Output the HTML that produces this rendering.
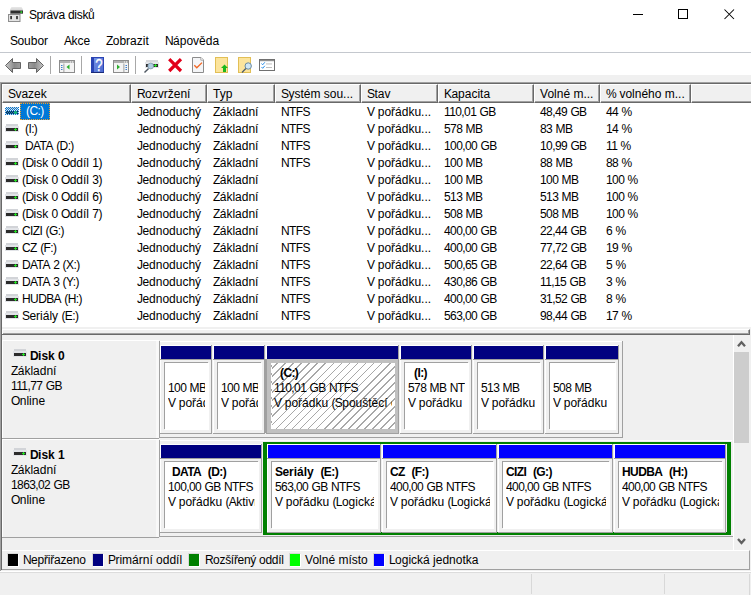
<!DOCTYPE html>
<html><head><meta charset="utf-8">
<style>
*{margin:0;padding:0;box-sizing:border-box}
html,body{width:751px;height:595px;overflow:hidden;background:#f0f0f0;font-family:"Liberation Sans",sans-serif;font-size:12px;color:#000;position:relative}
.a{position:absolute;white-space:nowrap}
.menu{top:34px}
.hd{top:84px;height:19px;background:#f0f0f0;border-left:1px solid #fff;border-top:1px solid #fff;border-right:1px solid #696969;border-bottom:1px solid #696969;box-shadow:inset -1px -1px #a0a0a0}
.ht{position:absolute;top:2px;left:5px;white-space:nowrap}
.c{line-height:14px}
.sel{background:#0078d7;color:#fff;outline:1px dotted #f0a030;outline-offset:-1px;height:17px;width:30px;line-height:17px;padding:0 0 0 6px}
.dico{position:absolute;width:14px;height:8px;background:linear-gradient(#22dd22,#22dd22) 9px 5px/3px 1px no-repeat,linear-gradient(#22dd22,#22dd22) 10px 4px/1px 3px no-repeat,linear-gradient(#2c2c2c,#2c2c2c) 1px 4px/12px 3px no-repeat,linear-gradient(#e2e4e8,#e2e4e8) 0 2px/14px 6px no-repeat,linear-gradient(#d2d4d8,#d2d4d8) 1px 0/12px 2px no-repeat}
.seph{position:absolute;width:1px;height:18px;background:#a0a0a0;top:56px}
.pb{position:absolute;background:#fff}
.ph{position:absolute;background:#000080}
.pl{position:absolute;background:#0000ff}
.pt{position:absolute;white-space:nowrap;overflow:hidden;line-height:16px}
.lg{position:absolute;top:553px;width:12px;height:14px;border:1px solid #fff;border-top-color:#d8d8d8;border-left-color:#d8d8d8}
.lt{position:absolute;top:553px;line-height:14px}
.n{letter-spacing:-0.6px}
</style></head><body>
<!-- title bar -->
<div class="a" style="left:0;top:0;width:751px;height:52px;background:#fff"></div>
<svg class="a" style="left:8px;top:6px" width="17" height="17" viewBox="0 0 17 17">
 <defs><linearGradient id="tg" x1="0" y1="0" x2="0" y2="1"><stop offset="0" stop-color="#e8e8e8"/><stop offset="1" stop-color="#bdbdbd"/></linearGradient></defs>
 <path d="M3.5 1 h10 l1.5 2.5 v4.5 H2 v-4.5 z" fill="url(#tg)"/>
 <rect x="2.5" y="4.5" width="12.5" height="3" fill="#2e2e2e"/>
 <rect x="12.5" y="5.3" width="1.6" height="1.6" fill="#2ee82e"/>
 <rect x="0.5" y="8.5" width="11.5" height="7" fill="#e4e4e4" stroke="#8e8e8e" stroke-width="1"/>
 <rect x="2.3" y="10" width="1.6" height="3.2" fill="#262626"/>
 <rect x="8.2" y="10" width="1.6" height="3.2" fill="#262626"/>
</svg>
<div class="a" style="left:29px;top:8px;letter-spacing:-0.3px"><span class="n">S</span>práva disků</div>
<div class="a" style="left:633px;top:14px;width:10px;height:1px;background:#000"></div>
<div class="a" style="left:678px;top:9px;width:10px;height:10px;border:1px solid #000"></div>
<svg class="a" style="left:724px;top:9px" width="11" height="11" viewBox="0 0 11 11"><path d="M0.5 0.5L10 10M10 0.5L0.5 10" stroke="#000" stroke-width="1.05"/></svg>
<!-- menu -->
<div class="a menu" style="left:10px"><span class="n">S</span>oubor</div>
<div class="a menu" style="left:64px"><span class="n">A</span>kce</div>
<div class="a menu" style="left:106px"><span class="n">Z</span>obrazit</div>
<div class="a menu" style="left:165px"><span class="n">N</span>ápověda</div>
<div class="a" style="left:0;top:52px;width:751px;height:1px;background:#c4c8ce"></div>
<!-- toolbar -->
<div class="a" style="left:0;top:53px;width:751px;height:22px;background:#fff"></div>
<svg class="a" style="left:0;top:53px" width="290" height="22" viewBox="0 53 290 22">
 <defs>
  <linearGradient id="ag" x1="0" y1="0" x2="1" y2="0"><stop offset="0" stop-color="#c8c8c8"/><stop offset="0.6" stop-color="#8a8a8a"/><stop offset="1" stop-color="#a0a0a0"/></linearGradient><linearGradient id="ag2" x1="1" y1="0" x2="0" y2="0"><stop offset="0" stop-color="#c8c8c8"/><stop offset="0.6" stop-color="#8a8a8a"/><stop offset="1" stop-color="#a0a0a0"/></linearGradient>
  <linearGradient id="hg" x1="0" y1="0" x2="1" y2="1"><stop offset="0" stop-color="#7590e4"/><stop offset="1" stop-color="#4a6ad0"/></linearGradient>
 </defs>
 <!-- back -->
 <path d="M5.5 65.5 L12.5 58.5 V62.5 H20.5 V68.5 H12.5 V72.5 Z" fill="url(#ag)" stroke="#646464" stroke-width="1" stroke-linejoin="round"/>
 <!-- forward -->
 <path d="M43.5 65.5 L36.5 58.5 V62.5 H28.5 V68.5 H36.5 V72.5 Z" fill="url(#ag2)" stroke="#646464" stroke-width="1" stroke-linejoin="round"/>
 <rect x="50" y="56" width="1" height="18" fill="#a8a8a8"/>
 <!-- console tree -->
 <rect x="59.5" y="60.5" width="15" height="12" fill="#f4f4f4" stroke="#8c8c8c"/>
 <rect x="60" y="61" width="14" height="2" fill="#b0b0b0"/>
 <rect x="70" y="61.5" width="1" height="1" fill="#fff"/><rect x="72" y="61.5" width="1" height="1" fill="#fff"/>
 <rect x="63.5" y="63.5" width="0.8" height="9" fill="#8c8c8c"/>
 <rect x="61" y="65" width="1.5" height="1" fill="#3a7ed0"/><rect x="61" y="67" width="1.5" height="1" fill="#3a7ed0"/><rect x="61" y="69" width="1.5" height="1" fill="#3a7ed0"/>
 <path d="M66.5 67 L69.5 64.5 V69.5 Z" fill="#2cae2c"/>
 <rect x="81" y="56" width="1" height="18" fill="#a8a8a8"/>
 <!-- help -->
 <rect x="91" y="57" width="13" height="16" fill="#2a44b4"/>
 <rect x="94" y="58" width="9" height="14" fill="url(#hg)"/>
 <rect x="91" y="72" width="13" height="1" fill="#1a2a78"/>
 <text x="98.8" y="70.6" font-family="Liberation Sans" font-size="16" fill="#fff" text-anchor="middle" stroke="#fff" stroke-width="0.3" transform="translate(98.8 0) scale(0.82 1) translate(-98.8 0)">?</text>
 <!-- action pane -->
 <rect x="113.5" y="60.5" width="15" height="12" fill="#f4f4f4" stroke="#8c8c8c"/>
 <rect x="114" y="61" width="14" height="2" fill="#b0b0b0"/>
 <rect x="124" y="61.5" width="1" height="1" fill="#fff"/><rect x="126" y="61.5" width="1" height="1" fill="#fff"/>
 <rect x="123.5" y="63.5" width="0.8" height="9" fill="#8c8c8c"/>
 <rect x="125.5" y="65" width="1.5" height="1" fill="#3a7ed0"/><rect x="125.5" y="67" width="1.5" height="1" fill="#3a7ed0"/><rect x="125.5" y="69" width="1.5" height="1" fill="#3a7ed0"/>
 <path d="M117 64.5 L120 67 L117 69.5 Z" fill="#2cae2c"/>
 <rect x="135" y="56" width="1" height="18" fill="#a8a8a8"/>
 <!-- disk magnifier -->
 <rect x="146" y="60" width="12" height="2" fill="#d6d8dc"/>
 <rect x="145" y="62" width="14" height="6" fill="#e4e6ea"/>
 <rect x="146" y="64" width="12" height="3" fill="#2e2e2e"/>
 <rect x="154" y="65" width="3" height="1" fill="#22e022"/><rect x="155" y="64" width="1" height="3" fill="#22e022"/>
 <path d="M148.6 68.4 L144.5 72.4" stroke="#4e5862" stroke-width="1.4"/>
 <circle cx="150.7" cy="66" r="2.9" fill="#b0cce2" stroke="#7890a4" stroke-width="0.7"/>
 <!-- red X -->
 <path d="M169.2 59.2 L181 71 M181 59.2 L169.2 71" stroke="#e2001a" stroke-width="3.2"/>
 <!-- doc check -->
 <path d="M192.5 57.5 H201 L203.5 60 V72.5 H192.5 Z" fill="#f4f5f7" stroke="#8c8c8c"/>
 <path d="M200.8 57.5 V60.2 H203.5" fill="#fff" stroke="#9a9a9a" stroke-width="0.8"/>
 <path d="M194.3 65.3 L196.8 67.8 L202 62.6" fill="none" stroke="#f26522" stroke-width="1.3"/>
 <!-- folder up -->
 <rect x="215.5" y="57.5" width="12" height="15" fill="#fce49c" stroke="#e2bf56"/>
 <path d="M224.5 64.5 L228 68 H226 V72 H223 V68 H221 Z" fill="#1cb81c"/>
 <!-- folder magnifier -->
 <rect x="238.5" y="57.5" width="12" height="15" fill="#fce49c" stroke="#e2bf56"/>
 <circle cx="248.2" cy="66" r="3.2" fill="#cfe6f4" stroke="#6a8aa0" stroke-width="1"/>
 <path d="M245.8 68.5 L242 72.5" stroke="#4a5a6a" stroke-width="1.2"/>
 <!-- checklist -->
 <rect x="259.5" y="59.5" width="15" height="11" fill="#fff" stroke="#707070"/>
 <rect x="260" y="60" width="14" height="1.2" fill="#909090"/>
 <path d="M261.5 63.5 L262.7 64.8 L264.8 62.3 M261.5 67 L262.7 68.3 L264.8 65.8" fill="none" stroke="#2a8ee8" stroke-width="1"/>
 <rect x="266" y="63.5" width="6" height="0.9" fill="#b8b8b8"/><rect x="266" y="67" width="6" height="0.9" fill="#b8b8b8"/>
</svg>


<!-- list view -->
<div class="a" style="left:0;top:82px;width:751px;height:252px;background:#fff;border-left:1px solid #a0a0a0;border-top:1px solid #a0a0a0"></div><div class="a" style="left:1px;top:83px;width:750px;height:251px;border-left:1px solid #696969;border-top:1px solid #696969"></div>
<div class="a hd" style="left:2px;width:129px"><span class="ht"><span class="n">S</span>vazek</span></div>
<div class="a hd" style="left:131px;width:76px"><span class="ht"><span class="n">R</span>ozvržení</span></div>
<div class="a hd" style="left:207px;width:68px"><span class="ht"><span class="n">T</span>yp</span></div>
<div class="a hd" style="left:275px;width:86px"><span class="ht"><span class="n">S</span>ystém sou...</span></div>
<div class="a hd" style="left:361px;width:77px"><span class="ht"><span class="n">S</span>tav</span></div>
<div class="a hd" style="left:438px;width:96px"><span class="ht"><span class="n">K</span>apacita</span></div>
<div class="a hd" style="left:534px;width:66px"><span class="ht"><span class="n">V</span>olné m...</span></div>
<div class="a hd" style="left:600px;width:91px"><span class="ht"><span class="n">%</span> volného m...</span></div>
<div class="a hd" style="left:691px;width:70px"><span class="ht"></span></div>
<div class="dico" style="left:5px;top:107px"></div><div class="a" style="left:5px;top:107px;width:14px;height:8px;background:repeating-conic-gradient(#0078d7 0 25%, transparent 0 50%) 0 0/2px 2px"></div><div class="a sel" style="left:20px;top:103px"><span class="n">(C:)</span></div><div class="a c" style="left:137px;top:105px"><span class="n">J</span>ednoduchý</div><div class="a c" style="left:213px;top:105px"><span class="n">Z</span>ákladní</div><div class="a c" style="left:281px;top:105px"><span class="n">NTFS</span></div><div class="a c" style="left:367px;top:105px"><span class="n">V</span> pořádku...</div><div class="a c" style="left:444px;top:105px"><span class="n">110,01</span> <span class="n">GB</span></div><div class="a c" style="left:540px;top:105px"><span class="n">48,49</span> <span class="n">GB</span></div><div class="a c" style="left:606px;top:105px"><span class="n">44</span> <span class="n">%</span></div>
<div class="dico" style="left:5px;top:124px"></div><div class="a c" style="left:25px;top:122px"><span class="n">(I:)</span></div><div class="a c" style="left:137px;top:122px"><span class="n">J</span>ednoduchý</div><div class="a c" style="left:213px;top:122px"><span class="n">Z</span>ákladní</div><div class="a c" style="left:281px;top:122px"><span class="n">NTFS</span></div><div class="a c" style="left:367px;top:122px"><span class="n">V</span> pořádku...</div><div class="a c" style="left:444px;top:122px"><span class="n">578</span> <span class="n">MB</span></div><div class="a c" style="left:540px;top:122px"><span class="n">83</span> <span class="n">MB</span></div><div class="a c" style="left:606px;top:122px"><span class="n">14</span> <span class="n">%</span></div>
<div class="dico" style="left:5px;top:141px"></div><div class="a c" style="left:25px;top:139px"><span class="n">DATA</span> <span class="n">(D:)</span></div><div class="a c" style="left:137px;top:139px"><span class="n">J</span>ednoduchý</div><div class="a c" style="left:213px;top:139px"><span class="n">Z</span>ákladní</div><div class="a c" style="left:281px;top:139px"><span class="n">NTFS</span></div><div class="a c" style="left:367px;top:139px"><span class="n">V</span> pořádku...</div><div class="a c" style="left:444px;top:139px"><span class="n">100,00</span> <span class="n">GB</span></div><div class="a c" style="left:540px;top:139px"><span class="n">10,99</span> <span class="n">GB</span></div><div class="a c" style="left:606px;top:139px"><span class="n">11</span> <span class="n">%</span></div>
<div class="dico" style="left:5px;top:158px"></div><div class="a c" style="left:22px;top:156px"><span class="n">(D</span>isk <span class="n">0</span> <span class="n">O</span>ddíl <span class="n">1)</span></div><div class="a c" style="left:137px;top:156px"><span class="n">J</span>ednoduchý</div><div class="a c" style="left:213px;top:156px"><span class="n">Z</span>ákladní</div><div class="a c" style="left:281px;top:156px"><span class="n">NTFS</span></div><div class="a c" style="left:367px;top:156px"><span class="n">V</span> pořádku...</div><div class="a c" style="left:444px;top:156px"><span class="n">100</span> <span class="n">MB</span></div><div class="a c" style="left:540px;top:156px"><span class="n">88</span> <span class="n">MB</span></div><div class="a c" style="left:606px;top:156px"><span class="n">88</span> <span class="n">%</span></div>
<div class="dico" style="left:5px;top:175px"></div><div class="a c" style="left:22px;top:173px"><span class="n">(D</span>isk <span class="n">0</span> <span class="n">O</span>ddíl <span class="n">3)</span></div><div class="a c" style="left:137px;top:173px"><span class="n">J</span>ednoduchý</div><div class="a c" style="left:213px;top:173px"><span class="n">Z</span>ákladní</div><div class="a c" style="left:367px;top:173px"><span class="n">V</span> pořádku...</div><div class="a c" style="left:444px;top:173px"><span class="n">100</span> <span class="n">MB</span></div><div class="a c" style="left:540px;top:173px"><span class="n">100</span> <span class="n">MB</span></div><div class="a c" style="left:606px;top:173px"><span class="n">100</span> <span class="n">%</span></div>
<div class="dico" style="left:5px;top:192px"></div><div class="a c" style="left:22px;top:190px"><span class="n">(D</span>isk <span class="n">0</span> <span class="n">O</span>ddíl <span class="n">6)</span></div><div class="a c" style="left:137px;top:190px"><span class="n">J</span>ednoduchý</div><div class="a c" style="left:213px;top:190px"><span class="n">Z</span>ákladní</div><div class="a c" style="left:367px;top:190px"><span class="n">V</span> pořádku...</div><div class="a c" style="left:444px;top:190px"><span class="n">513</span> <span class="n">MB</span></div><div class="a c" style="left:540px;top:190px"><span class="n">513</span> <span class="n">MB</span></div><div class="a c" style="left:606px;top:190px"><span class="n">100</span> <span class="n">%</span></div>
<div class="dico" style="left:5px;top:209px"></div><div class="a c" style="left:22px;top:207px"><span class="n">(D</span>isk <span class="n">0</span> <span class="n">O</span>ddíl <span class="n">7)</span></div><div class="a c" style="left:137px;top:207px"><span class="n">J</span>ednoduchý</div><div class="a c" style="left:213px;top:207px"><span class="n">Z</span>ákladní</div><div class="a c" style="left:367px;top:207px"><span class="n">V</span> pořádku...</div><div class="a c" style="left:444px;top:207px"><span class="n">508</span> <span class="n">MB</span></div><div class="a c" style="left:540px;top:207px"><span class="n">508</span> <span class="n">MB</span></div><div class="a c" style="left:606px;top:207px"><span class="n">100</span> <span class="n">%</span></div>
<div class="dico" style="left:5px;top:226px"></div><div class="a c" style="left:22px;top:224px"><span class="n">CIZI</span> <span class="n">(G:)</span></div><div class="a c" style="left:137px;top:224px"><span class="n">J</span>ednoduchý</div><div class="a c" style="left:213px;top:224px"><span class="n">Z</span>ákladní</div><div class="a c" style="left:281px;top:224px"><span class="n">NTFS</span></div><div class="a c" style="left:367px;top:224px"><span class="n">V</span> pořádku...</div><div class="a c" style="left:444px;top:224px"><span class="n">400,00</span> <span class="n">GB</span></div><div class="a c" style="left:540px;top:224px"><span class="n">22,44</span> <span class="n">GB</span></div><div class="a c" style="left:606px;top:224px"><span class="n">6</span> <span class="n">%</span></div>
<div class="dico" style="left:5px;top:243px"></div><div class="a c" style="left:22px;top:241px"><span class="n">CZ</span> <span class="n">(F:)</span></div><div class="a c" style="left:137px;top:241px"><span class="n">J</span>ednoduchý</div><div class="a c" style="left:213px;top:241px"><span class="n">Z</span>ákladní</div><div class="a c" style="left:281px;top:241px"><span class="n">NTFS</span></div><div class="a c" style="left:367px;top:241px"><span class="n">V</span> pořádku...</div><div class="a c" style="left:444px;top:241px"><span class="n">400,00</span> <span class="n">GB</span></div><div class="a c" style="left:540px;top:241px"><span class="n">77,72</span> <span class="n">GB</span></div><div class="a c" style="left:606px;top:241px"><span class="n">19</span> <span class="n">%</span></div>
<div class="dico" style="left:5px;top:260px"></div><div class="a c" style="left:22px;top:258px"><span class="n">DATA</span> <span class="n">2</span> <span class="n">(X:)</span></div><div class="a c" style="left:137px;top:258px"><span class="n">J</span>ednoduchý</div><div class="a c" style="left:213px;top:258px"><span class="n">Z</span>ákladní</div><div class="a c" style="left:281px;top:258px"><span class="n">NTFS</span></div><div class="a c" style="left:367px;top:258px"><span class="n">V</span> pořádku...</div><div class="a c" style="left:444px;top:258px"><span class="n">500,65</span> <span class="n">GB</span></div><div class="a c" style="left:540px;top:258px"><span class="n">22,64</span> <span class="n">GB</span></div><div class="a c" style="left:606px;top:258px"><span class="n">5</span> <span class="n">%</span></div>
<div class="dico" style="left:5px;top:277px"></div><div class="a c" style="left:22px;top:275px"><span class="n">DATA</span> <span class="n">3</span> <span class="n">(Y:)</span></div><div class="a c" style="left:137px;top:275px"><span class="n">J</span>ednoduchý</div><div class="a c" style="left:213px;top:275px"><span class="n">Z</span>ákladní</div><div class="a c" style="left:281px;top:275px"><span class="n">NTFS</span></div><div class="a c" style="left:367px;top:275px"><span class="n">V</span> pořádku...</div><div class="a c" style="left:444px;top:275px"><span class="n">430,86</span> <span class="n">GB</span></div><div class="a c" style="left:540px;top:275px"><span class="n">11,15</span> <span class="n">GB</span></div><div class="a c" style="left:606px;top:275px"><span class="n">3</span> <span class="n">%</span></div>
<div class="dico" style="left:5px;top:294px"></div><div class="a c" style="left:22px;top:292px"><span class="n">HUDBA</span> <span class="n">(H:)</span></div><div class="a c" style="left:137px;top:292px"><span class="n">J</span>ednoduchý</div><div class="a c" style="left:213px;top:292px"><span class="n">Z</span>ákladní</div><div class="a c" style="left:281px;top:292px"><span class="n">NTFS</span></div><div class="a c" style="left:367px;top:292px"><span class="n">V</span> pořádku...</div><div class="a c" style="left:444px;top:292px"><span class="n">400,00</span> <span class="n">GB</span></div><div class="a c" style="left:540px;top:292px"><span class="n">31,52</span> <span class="n">GB</span></div><div class="a c" style="left:606px;top:292px"><span class="n">8</span> <span class="n">%</span></div>
<div class="dico" style="left:5px;top:311px"></div><div class="a c" style="left:22px;top:309px"><span class="n">S</span>eriály <span class="n">(E:)</span></div><div class="a c" style="left:137px;top:309px"><span class="n">J</span>ednoduchý</div><div class="a c" style="left:213px;top:309px"><span class="n">Z</span>ákladní</div><div class="a c" style="left:281px;top:309px"><span class="n">NTFS</span></div><div class="a c" style="left:367px;top:309px"><span class="n">V</span> pořádku...</div><div class="a c" style="left:444px;top:309px"><span class="n">563,00</span> <span class="n">GB</span></div><div class="a c" style="left:540px;top:309px"><span class="n">98,44</span> <span class="n">GB</span></div><div class="a c" style="left:606px;top:309px"><span class="n">17</span> <span class="n">%</span></div>
<!-- list bottom -->
<div class="a" style="left:2px;top:327px;width:749px;height:7px;background:#f0f0f0"></div>
<div class="a" style="left:2px;top:329px;width:748px;height:6px;border-top:1px solid #fff;border-left:1px solid #fff;border-bottom:1px solid #696969;border-right:1px solid #696969"></div><div class="a" style="left:2px;top:334px;width:3px;height:1px;background:#696969"></div><div class="a" style="left:3px;top:330px;width:746px;height:4px;border-bottom:1px solid #a0a0a0;border-right:1px solid #a0a0a0"></div>

<!-- graphical view -->
<div class="a" style="left:2px;top:340px;width:157px;height:98px;background:#f0f0f0;"></div><div class="a" style="left:2px;top:340px;width:157px;height:1px;background:#fff;"></div><div class="a" style="left:2px;top:340px;width:1px;height:98px;background:#fff;"></div><div class="a" style="left:156px;top:341px;width:3px;height:97px;background:#f8f8f8;"></div><div class="a" style="left:2px;top:438px;width:157px;height:1px;background:#a0a0a0;"></div><div class="dico" style="left:13px;top:349px"></div><div class="a" style="left:30px;top:349px;font-weight:bold;line-height:14px"><span class="n">D</span>isk <span class="n">0</span></div><div class="a" style="left:11px;top:364px;line-height:14px"><span class="n">Z</span>ákladní</div><div class="a" style="left:11px;top:379px;line-height:14px"><span class="n">111,77</span> <span class="n">GB</span></div><div class="a" style="left:11px;top:394px;line-height:14px"><span class="n">O</span>nline</div>
<div class="a" style="left:159px;top:341px;width:464px;height:97px;background:#f0f0f0;"></div>
<div class="a" style="left:160px;top:341px;width:462px;height:1px;background:#fff;"></div>
<div class="a" style="left:159px;top:341px;width:1px;height:97px;background:#a0a0a0;"></div>
<div class="a" style="left:622px;top:341px;width:1px;height:97px;background:#a0a0a0;"></div>
<div class="a" style="left:159px;top:437px;width:464px;height:1px;background:#a0a0a0;"></div>
<div class="a" style="left:160px;top:345px;width:52px;height:89px;background:#f0f0f0;"></div><div class="a" style="left:160px;top:345px;width:51px;height:1px;background:#fff;"></div><div class="a" style="left:160px;top:345px;width:1px;height:88px;background:#fff;"></div><div class="a" style="left:161px;top:346px;width:50px;height:13px;background:#000080;"></div><div class="a" style="left:160px;top:359px;width:52px;height:1px;background:#a0a0a0;"></div><div class="a" style="left:211px;top:345px;width:1px;height:89px;background:#a0a0a0;"></div><div class="a" style="left:160px;top:433px;width:52px;height:1px;background:#a0a0a0;"></div><div class="a" style="left:164px;top:362px;width:44px;height:1px;background:#a0a0a0;"></div><div class="a" style="left:164px;top:362px;width:1px;height:67px;background:#a0a0a0;"></div><div class="a" style="left:165px;top:363px;width:44px;height:67px;background:#fff;"></div><div class="pt" style="left:168px;top:380px;width:37px;"><span class="n">100</span> <span class="n">MB</span></div><div class="pt" style="left:168px;top:395px;width:37px;"><span class="n">V</span> pořádku</div>
<div class="a" style="left:213px;top:345px;width:52px;height:89px;background:#f0f0f0;"></div><div class="a" style="left:213px;top:345px;width:51px;height:1px;background:#fff;"></div><div class="a" style="left:213px;top:345px;width:1px;height:88px;background:#fff;"></div><div class="a" style="left:214px;top:346px;width:50px;height:13px;background:#000080;"></div><div class="a" style="left:213px;top:359px;width:52px;height:1px;background:#a0a0a0;"></div><div class="a" style="left:264px;top:345px;width:1px;height:89px;background:#a0a0a0;"></div><div class="a" style="left:213px;top:433px;width:52px;height:1px;background:#a0a0a0;"></div><div class="a" style="left:217px;top:362px;width:44px;height:1px;background:#a0a0a0;"></div><div class="a" style="left:217px;top:362px;width:1px;height:67px;background:#a0a0a0;"></div><div class="a" style="left:218px;top:363px;width:44px;height:67px;background:#fff;"></div><div class="pt" style="left:221px;top:380px;width:37px;"><span class="n">100</span> <span class="n">MB</span></div><div class="pt" style="left:221px;top:395px;width:37px;"><span class="n">V</span> pořádku</div>
<div class="a" style="left:266px;top:345px;width:133px;height:89px;background:#f0f0f0;"></div><div class="a" style="left:266px;top:345px;width:132px;height:1px;background:#fff;"></div><div class="a" style="left:266px;top:345px;width:1px;height:88px;background:#fff;"></div><div class="a" style="left:267px;top:346px;width:131px;height:13px;background:#000080;"></div><div class="a" style="left:266px;top:359px;width:133px;height:1px;background:#a0a0a0;"></div><div class="a" style="left:398px;top:345px;width:1px;height:89px;background:#a0a0a0;"></div><div class="a" style="left:266px;top:433px;width:133px;height:1px;background:#a0a0a0;"></div><div class="a" style="left:267px;top:359px;width:131px;height:74px;background:#c0c0c0;"></div><div class="a" style="left:265px;top:359px;width:2px;height:74px;background:#a0a0a0;"></div><div class="a" style="left:271px;top:363px;width:124px;height:66px;background:#fff;background:#fff repeating-linear-gradient(-45deg, #fff 0, #fff 4.6px, #a8a8a8 4.6px, #a8a8a8 5.7px) 1px 0"></div><div class="pt" style="left:280px;top:365px;width:112px;font-weight:bold;"><span class="n">(C:)</span></div><div class="pt" style="left:274px;top:380px;width:118px;"><span class="n">110,01</span> <span class="n">GB</span> <span class="n">NTFS</span></div><div class="pt" style="left:274px;top:395px;width:118px;"><span class="n">V</span> pořádku <span class="n">(S</span>pouštěcí oddíl<span class="n">)</span></div>
<div class="a" style="left:400px;top:345px;width:72px;height:89px;background:#f0f0f0;"></div><div class="a" style="left:400px;top:345px;width:71px;height:1px;background:#fff;"></div><div class="a" style="left:400px;top:345px;width:1px;height:88px;background:#fff;"></div><div class="a" style="left:401px;top:346px;width:70px;height:13px;background:#000080;"></div><div class="a" style="left:400px;top:359px;width:72px;height:1px;background:#a0a0a0;"></div><div class="a" style="left:471px;top:345px;width:1px;height:89px;background:#a0a0a0;"></div><div class="a" style="left:400px;top:433px;width:72px;height:1px;background:#a0a0a0;"></div><div class="a" style="left:404px;top:362px;width:64px;height:1px;background:#a0a0a0;"></div><div class="a" style="left:404px;top:362px;width:1px;height:67px;background:#a0a0a0;"></div><div class="a" style="left:405px;top:363px;width:64px;height:67px;background:#fff;"></div><div class="pt" style="left:414px;top:365px;width:51px;font-weight:bold;"><span class="n">(I:)</span></div><div class="pt" style="left:408px;top:380px;width:57px;"><span class="n">578</span> <span class="n">MB</span> <span class="n">NTFS</span></div><div class="pt" style="left:408px;top:395px;width:57px;"><span class="n">V</span> pořádku</div>
<div class="a" style="left:473px;top:345px;width:71px;height:89px;background:#f0f0f0;"></div><div class="a" style="left:473px;top:345px;width:70px;height:1px;background:#fff;"></div><div class="a" style="left:473px;top:345px;width:1px;height:88px;background:#fff;"></div><div class="a" style="left:474px;top:346px;width:69px;height:13px;background:#000080;"></div><div class="a" style="left:473px;top:359px;width:71px;height:1px;background:#a0a0a0;"></div><div class="a" style="left:543px;top:345px;width:1px;height:89px;background:#a0a0a0;"></div><div class="a" style="left:473px;top:433px;width:71px;height:1px;background:#a0a0a0;"></div><div class="a" style="left:477px;top:362px;width:63px;height:1px;background:#a0a0a0;"></div><div class="a" style="left:477px;top:362px;width:1px;height:67px;background:#a0a0a0;"></div><div class="a" style="left:478px;top:363px;width:63px;height:67px;background:#fff;"></div><div class="pt" style="left:481px;top:380px;width:56px;"><span class="n">513</span> <span class="n">MB</span></div><div class="pt" style="left:481px;top:395px;width:56px;"><span class="n">V</span> pořádku</div>
<div class="a" style="left:545px;top:345px;width:74px;height:89px;background:#f0f0f0;"></div><div class="a" style="left:545px;top:345px;width:73px;height:1px;background:#fff;"></div><div class="a" style="left:545px;top:345px;width:1px;height:88px;background:#fff;"></div><div class="a" style="left:546px;top:346px;width:72px;height:13px;background:#000080;"></div><div class="a" style="left:545px;top:359px;width:74px;height:1px;background:#a0a0a0;"></div><div class="a" style="left:618px;top:345px;width:1px;height:89px;background:#a0a0a0;"></div><div class="a" style="left:545px;top:433px;width:74px;height:1px;background:#a0a0a0;"></div><div class="a" style="left:549px;top:362px;width:66px;height:1px;background:#a0a0a0;"></div><div class="a" style="left:549px;top:362px;width:1px;height:67px;background:#a0a0a0;"></div><div class="a" style="left:550px;top:363px;width:66px;height:67px;background:#fff;"></div><div class="pt" style="left:553px;top:380px;width:59px;"><span class="n">508</span> <span class="n">MB</span></div><div class="pt" style="left:553px;top:395px;width:59px;"><span class="n">V</span> pořádku</div>
<div class="a" style="left:2px;top:439px;width:157px;height:98px;background:#f0f0f0;"></div><div class="a" style="left:2px;top:439px;width:157px;height:1px;background:#fff;"></div><div class="a" style="left:2px;top:439px;width:1px;height:98px;background:#fff;"></div><div class="a" style="left:156px;top:440px;width:3px;height:97px;background:#f8f8f8;"></div><div class="a" style="left:2px;top:537px;width:157px;height:1px;background:#a0a0a0;"></div><div class="dico" style="left:13px;top:448px"></div><div class="a" style="left:30px;top:448px;font-weight:bold;line-height:14px"><span class="n">D</span>isk <span class="n">1</span></div><div class="a" style="left:11px;top:463px;line-height:14px"><span class="n">Z</span>ákladní</div><div class="a" style="left:11px;top:478px;line-height:14px"><span class="n">1863,02</span> <span class="n">GB</span></div><div class="a" style="left:11px;top:493px;line-height:14px"><span class="n">O</span>nline</div>
<div class="a" style="left:159px;top:440px;width:574px;height:97px;background:#f0f0f0;"></div>
<div class="a" style="left:160px;top:440px;width:572px;height:1px;background:#fff;"></div>
<div class="a" style="left:159px;top:440px;width:1px;height:97px;background:#a0a0a0;"></div>
<div class="a" style="left:159px;top:536px;width:574px;height:1px;background:#a0a0a0;"></div>
<div class="a" style="left:160px;top:444px;width:102px;height:89px;background:#f0f0f0;"></div><div class="a" style="left:160px;top:444px;width:101px;height:1px;background:#fff;"></div><div class="a" style="left:160px;top:444px;width:1px;height:88px;background:#fff;"></div><div class="a" style="left:161px;top:445px;width:100px;height:13px;background:#000080;"></div><div class="a" style="left:160px;top:458px;width:102px;height:1px;background:#a0a0a0;"></div><div class="a" style="left:261px;top:444px;width:1px;height:89px;background:#a0a0a0;"></div><div class="a" style="left:160px;top:532px;width:102px;height:1px;background:#a0a0a0;"></div><div class="a" style="left:164px;top:461px;width:94px;height:1px;background:#a0a0a0;"></div><div class="a" style="left:164px;top:461px;width:1px;height:67px;background:#a0a0a0;"></div><div class="a" style="left:165px;top:462px;width:94px;height:67px;background:#fff;"></div><div class="pt" style="left:172px;top:464px;width:83px;font-weight:bold;"><span class="n">DATA</span>&nbsp; <span class="n">(D:)</span></div><div class="pt" style="left:168px;top:479px;width:87px;"><span class="n">100,00</span> <span class="n">GB</span> <span class="n">NTFS</span></div><div class="pt" style="left:168px;top:494px;width:87px;"><span class="n">V</span> pořádku <span class="n">(A</span>ktivní<span class="n">,</span> <span class="n">P</span>rimární oddíl<span class="n">)</span></div>
<div class="a" style="left:263px;top:442px;width:468px;height:93px;background:#008000;"></div>
<div class="a" style="left:267px;top:444px;width:460px;height:88px;background:#f0f0f0;"></div>
<div class="a" style="left:267px;top:444px;width:114px;height:89px;background:#f0f0f0;"></div><div class="a" style="left:267px;top:444px;width:113px;height:1px;background:#fff;"></div><div class="a" style="left:267px;top:444px;width:1px;height:88px;background:#fff;"></div><div class="a" style="left:268px;top:445px;width:112px;height:13px;background:#0000ff;"></div><div class="a" style="left:267px;top:458px;width:114px;height:1px;background:#a0a0a0;"></div><div class="a" style="left:380px;top:444px;width:1px;height:89px;background:#a0a0a0;"></div><div class="a" style="left:267px;top:532px;width:114px;height:1px;background:#a0a0a0;"></div><div class="a" style="left:271px;top:461px;width:106px;height:1px;background:#a0a0a0;"></div><div class="a" style="left:271px;top:461px;width:1px;height:67px;background:#a0a0a0;"></div><div class="a" style="left:272px;top:462px;width:106px;height:67px;background:#fff;"></div><div class="pt" style="left:275px;top:464px;width:99px;font-weight:bold;"><span class="n">S</span>eriály&nbsp; <span class="n">(E:)</span></div><div class="pt" style="left:275px;top:479px;width:99px;"><span class="n">563,00</span> <span class="n">GB</span> <span class="n">NTFS</span></div><div class="pt" style="left:275px;top:494px;width:99px;"><span class="n">V</span> pořádku <span class="n">(L</span>ogická jednotka<span class="n">)</span></div>
<div class="a" style="left:382px;top:444px;width:115px;height:89px;background:#f0f0f0;"></div><div class="a" style="left:382px;top:444px;width:114px;height:1px;background:#fff;"></div><div class="a" style="left:382px;top:444px;width:1px;height:88px;background:#fff;"></div><div class="a" style="left:383px;top:445px;width:113px;height:13px;background:#0000ff;"></div><div class="a" style="left:382px;top:458px;width:115px;height:1px;background:#a0a0a0;"></div><div class="a" style="left:496px;top:444px;width:1px;height:89px;background:#a0a0a0;"></div><div class="a" style="left:382px;top:532px;width:115px;height:1px;background:#a0a0a0;"></div><div class="a" style="left:386px;top:461px;width:107px;height:1px;background:#a0a0a0;"></div><div class="a" style="left:386px;top:461px;width:1px;height:67px;background:#a0a0a0;"></div><div class="a" style="left:387px;top:462px;width:107px;height:67px;background:#fff;"></div><div class="pt" style="left:390px;top:464px;width:100px;font-weight:bold;"><span class="n">CZ</span>&nbsp; <span class="n">(F:)</span></div><div class="pt" style="left:390px;top:479px;width:100px;"><span class="n">400,00</span> <span class="n">GB</span> <span class="n">NTFS</span></div><div class="pt" style="left:390px;top:494px;width:100px;"><span class="n">V</span> pořádku <span class="n">(L</span>ogická jednotka<span class="n">)</span></div>
<div class="a" style="left:498px;top:444px;width:115px;height:89px;background:#f0f0f0;"></div><div class="a" style="left:498px;top:444px;width:114px;height:1px;background:#fff;"></div><div class="a" style="left:498px;top:444px;width:1px;height:88px;background:#fff;"></div><div class="a" style="left:499px;top:445px;width:113px;height:13px;background:#0000ff;"></div><div class="a" style="left:498px;top:458px;width:115px;height:1px;background:#a0a0a0;"></div><div class="a" style="left:612px;top:444px;width:1px;height:89px;background:#a0a0a0;"></div><div class="a" style="left:498px;top:532px;width:115px;height:1px;background:#a0a0a0;"></div><div class="a" style="left:502px;top:461px;width:107px;height:1px;background:#a0a0a0;"></div><div class="a" style="left:502px;top:461px;width:1px;height:67px;background:#a0a0a0;"></div><div class="a" style="left:503px;top:462px;width:107px;height:67px;background:#fff;"></div><div class="pt" style="left:506px;top:464px;width:100px;font-weight:bold;"><span class="n">CIZI</span>&nbsp; <span class="n">(G:)</span></div><div class="pt" style="left:506px;top:479px;width:100px;"><span class="n">400,00</span> <span class="n">GB</span> <span class="n">NTFS</span></div><div class="pt" style="left:506px;top:494px;width:100px;"><span class="n">V</span> pořádku <span class="n">(L</span>ogická jednotka<span class="n">)</span></div>
<div class="a" style="left:614px;top:444px;width:112px;height:89px;background:#f0f0f0;"></div><div class="a" style="left:614px;top:444px;width:111px;height:1px;background:#fff;"></div><div class="a" style="left:614px;top:444px;width:1px;height:88px;background:#fff;"></div><div class="a" style="left:615px;top:445px;width:110px;height:13px;background:#0000ff;"></div><div class="a" style="left:614px;top:458px;width:112px;height:1px;background:#a0a0a0;"></div><div class="a" style="left:725px;top:444px;width:1px;height:89px;background:#a0a0a0;"></div><div class="a" style="left:614px;top:532px;width:112px;height:1px;background:#a0a0a0;"></div><div class="a" style="left:618px;top:461px;width:104px;height:1px;background:#a0a0a0;"></div><div class="a" style="left:618px;top:461px;width:1px;height:67px;background:#a0a0a0;"></div><div class="a" style="left:619px;top:462px;width:104px;height:67px;background:#fff;"></div><div class="pt" style="left:622px;top:464px;width:97px;font-weight:bold;"><span class="n">HUDBA</span>&nbsp; <span class="n">(H:)</span></div><div class="pt" style="left:622px;top:479px;width:97px;"><span class="n">400,00</span> <span class="n">GB</span> <span class="n">NTFS</span></div><div class="pt" style="left:622px;top:494px;width:97px;"><span class="n">V</span> pořádku <span class="n">(L</span>ogická jednotka<span class="n">)</span></div>
<div class="a" style="left:733px;top:335px;width:1px;height:215px;background:#fff;"></div>
<div class="a" style="left:734px;top:335px;width:17px;height:215px;background:#f0f0f0;"></div>
<div class="a" style="left:734px;top:352px;width:15px;height:91px;background:#cdcdcd;"></div>
<svg class="a" style="left:736px;top:339px" width="11" height="9"><path d="M2 7.3 L5.5 3.3 L9 7.3" fill="none" stroke="#606060" stroke-width="2.3"/></svg>
<svg class="a" style="left:736px;top:537px" width="11" height="9"><path d="M2 2 L5.5 6 L9 2" fill="none" stroke="#606060" stroke-width="2.3"/></svg>

<!-- legend -->
<div class="a" style="left:2px;top:550px;width:748px;height:20px;background:#f0f0f0;border-top:1px solid #fff;border-bottom:1px solid #a0a0a0;border-right:1px solid #a0a0a0"></div>
<div class="lg" style="left:7px;background:#000"></div><div class="lt" style="left:23px;letter-spacing:-0.2px"><span class="n">N</span>epřiřazeno</div>
<div class="lg" style="left:92px;background:#000080"></div><div class="lt" style="left:108px"><span class="n">P</span>rimární oddíl</div>
<div class="lg" style="left:188px;background:#008000"></div><div class="lt" style="left:205px;letter-spacing:-0.3px"><span class="n">R</span>ozšířený oddíl</div>
<div class="lg" style="left:289px;background:#00ff00"></div><div class="lt" style="left:305px"><span class="n">V</span>olné místo</div>
<div class="lg" style="left:373px;background:#0000ff"></div><div class="lt" style="left:389px"><span class="n">L</span>ogická jednotka</div>
<!-- status bar -->
<div class="a" style="left:0;top:571px;width:751px;height:1px;background:#fff"></div><div class="a" style="left:0;top:572px;width:751px;height:1px;background:#dcdcdc"></div><div class="a" style="left:749px;top:574px;width:1px;height:21px;background:#d8d8d8"></div>
<div class="a" style="left:664px;top:574px;width:1px;height:20px;background:#d8d8d8"></div><div class="a" style="left:531px;top:574px;width:1px;height:20px;background:#d8d8d8"></div>
<!-- left border -->
<div class="a" style="left:0;top:82px;width:1px;height:489px;background:#a0a0a0"></div><div class="a" style="left:1px;top:83px;width:1px;height:487px;background:#696969"></div>
</body></html>
